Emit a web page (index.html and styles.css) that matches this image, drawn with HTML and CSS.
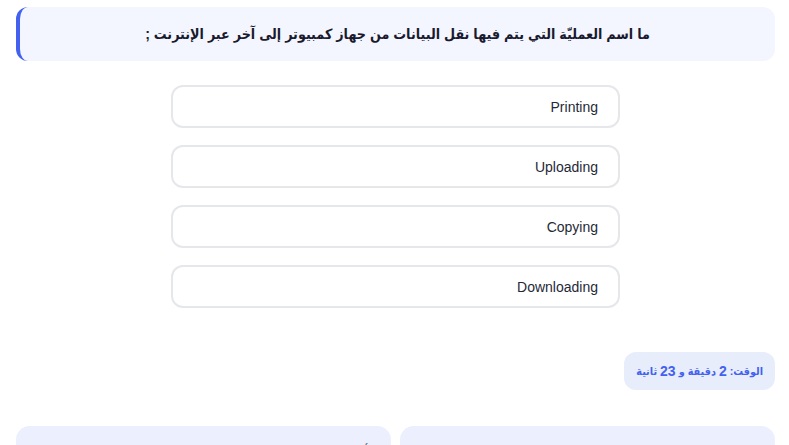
FILE: index.html
```html
<!DOCTYPE html>
<html lang="ar" dir="rtl">
<head>
<meta charset="utf-8">
<link rel="stylesheet" href="styles.css">
</head>
<body>
<div class="page">
  <div class="question">ما اسم العمليّة التي يتم فيها نقل البيانات من جهاز كمبيوتر إلى آخر عبر الإنترنت ;</div>
  <div class="options">
    <div class="option">Printing</div>
    <div class="option">Uploading</div>
    <div class="option">Copying</div>
    <div class="option">Downloading</div>
  </div>
  <div class="timer-row">
    <div class="timer">الوقت: <b>2</b> دقيقة و <b>23</b> ثانية</div>
  </div>
  <div class="stats">
    <div class="stat">الإجابات الصحيحة: <span class="num cyan">0</span></div>
    <div class="stat">الأسئلة المتبقية: <span class="num orange">10</span></div>
  </div>
</div>
</body>
</html>
```
FILE: styles.css
```css
* { box-sizing: border-box; }
html, body { margin: 0; padding: 0; background: #ffffff; }
body {
  font-family: "Liberation Sans", "DejaVu Sans Condensed", "DejaVu Sans", Arial, sans-serif;
  color: #1f2937;
  overflow: hidden;
}
.page {
  padding: 7px 14px 0 16px;
}
.question {
  background: #f3f6fe;
  border-left: 4px solid #4361ee;
  border-radius: 12px;
  height: 54px;
  display: flex;
  align-items: center;
  justify-content: center;
  font-weight: bold;
  font-size: 14.2px;
  color: #1a1a2e;
}
.options {
  width: 449px;
  margin: 24px auto 0;
  display: flex;
  flex-direction: column;
  gap: 17px;
}
.option {
  height: 43px;
  border: 2px solid #e5e7eb;
  border-radius: 12px;
  display: flex;
  align-items: center;
  padding: 0 20px;
  font-size: 14px;
  color: #1f2937;
  direction: rtl;
}
.timer-row {
  display: flex;
  margin-top: 44px;
}
.timer {
  background: #e8edfc;
  border-radius: 12px;
  height: 38px;
  padding: 0 12px;
  display: flex;
  align-items: center;
  font-size: 10.8px;
  font-weight: bold;
  color: #4361ee;
  white-space: pre;
}
.timer b { font-size: 14px; }
.stats {
  margin-top: 36px;
  display: grid;
  grid-template-columns: 1fr 1fr;
  gap: 9px;
}
.stat {
  background: #eceffd;
  border-radius: 14px;
  height: 60px;
  padding: 16px 14px;
  font-size: 12px;
  font-weight: bold;
  color: #374151;
}
.num { font-size: 14px; }
.cyan { color: #22b8cf; }
.orange { color: #f59e0b; }
```
